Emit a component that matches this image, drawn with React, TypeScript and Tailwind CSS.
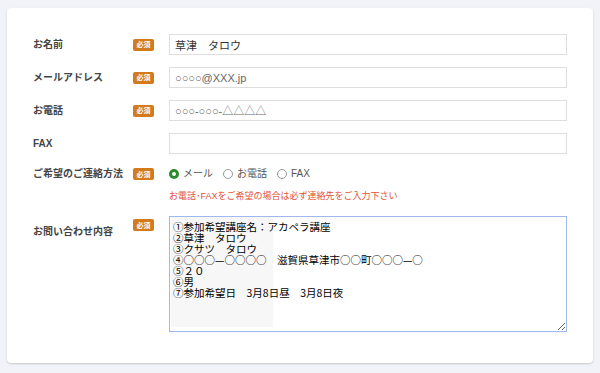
import React from "react";

const font = { fontFamily: '"Liberation Sans", "Noto Sans CJK JP", sans-serif' };

function Badge() {
  return (
    <span className="flex h-[12px] w-[21px] items-center justify-center rounded-[2px] bg-[#d27a1c] text-[7px] font-bold leading-none text-white">
      必須
    </span>
  );
}

function Label({ children }: { children: React.ReactNode }) {
  return <span className="text-[10px] font-bold leading-[14px] text-[#444]">{children}</span>;
}

function InputRow({
  label,
  required,
  value,
  placeholder,
  className = "",
}: {
  label: string;
  required?: boolean;
  value?: string;
  placeholder?: string;
  className?: string;
}) {
  return (
    <div className={`grid grid-cols-[100px_36px_398px] items-center ${className}`}>
      <Label>{label}</Label>
      <div>{required && <Badge />}</div>
      <input
        readOnly
        defaultValue={value}
        placeholder={placeholder}
        className="h-[21px] w-full border border-[#dedede] bg-white px-[5px] text-[11px] text-[#333] outline-none placeholder:text-[#666]"
        style={font}
      />
    </div>
  );
}

function Radio({ checked, label }: { checked?: boolean; label: string }) {
  return (
    <span className="flex items-center gap-[4px]">
      {checked ? (
        <span className="h-[10px] w-[10px] rounded-full border-[3px] border-[#2c8a2c] bg-white" />
      ) : (
        <span className="h-[10px] w-[10px] rounded-full border border-[#9a9a9a] bg-white" />
      )}
      <span className="text-[10px] leading-[14px] text-[#555]">{label}</span>
    </span>
  );
}

const message = `①参加希望講座名：アカペラ講座
②草津　タロウ
③クサツ　タロウ
④○○○—○○○○　滋賀県草津市○○町○○○—○
⑤２０
⑥男
⑦参加希望日　3月8日昼　3月8日夜`;

export default function App() {
  return (
    <div className="h-[373px] w-[600px] bg-[#f2f3f8] px-[7px] pt-[8px]" style={font}>
      <div className="h-[355px] rounded-[4px] bg-white px-[26px] pt-[26px] shadow-[0_1px_2px_rgba(0,0,0,0.18)]">
        <InputRow label="お名前" required value="草津　タロウ" />
        <InputRow label="メールアドレス" required placeholder="○○○○@XXX.jp" className="mt-[12px]" />
        <InputRow label="お電話" required placeholder="○○○-○○○-△△△△" className="mt-[12px]" />
        <InputRow label="FAX" className="mt-[12px]" />

        <div className="mt-[13px] grid grid-cols-[100px_36px_398px] items-center">
          <Label>ご希望のご連絡方法</Label>
          <div>
            <Badge />
          </div>
          <div className="flex items-center gap-[10px]">
            <Radio checked label="メール" />
            <Radio label="お電話" />
            <Radio label="FAX" />
          </div>
        </div>
        <div className="mt-[8px] grid grid-cols-[100px_36px_398px]">
          <div />
          <div />
          <p className="text-[9px] leading-[14px] text-[#e0553a]">
            お電話･FAXをご希望の場合は必ず連絡先をご入力下さい
          </p>
        </div>

        <div className="mt-[13px] grid grid-cols-[100px_36px_398px] items-start">
          <div className="pt-[2px]">
            <Label>お問い合わせ内容</Label>
          </div>
          <div className="pt-[3px]">
            <Badge />
          </div>
          <div className="relative h-[116px] w-full">
            <div className="absolute left-[2px] top-[1px] h-[110px] w-[102px] bg-[#f7f7f7]" />
            <textarea
              readOnly
              defaultValue={message}
              className="relative block h-[116px] w-full resize-y border border-[#9fb9ee] bg-transparent pl-[3px] pt-[4px] text-[10.5px] leading-[11px] text-black outline-none"
              style={{ fontFamily: '"Noto Sans CJK JP", sans-serif' }}
            />
          </div>
        </div>
      </div>
    </div>
  );
}
